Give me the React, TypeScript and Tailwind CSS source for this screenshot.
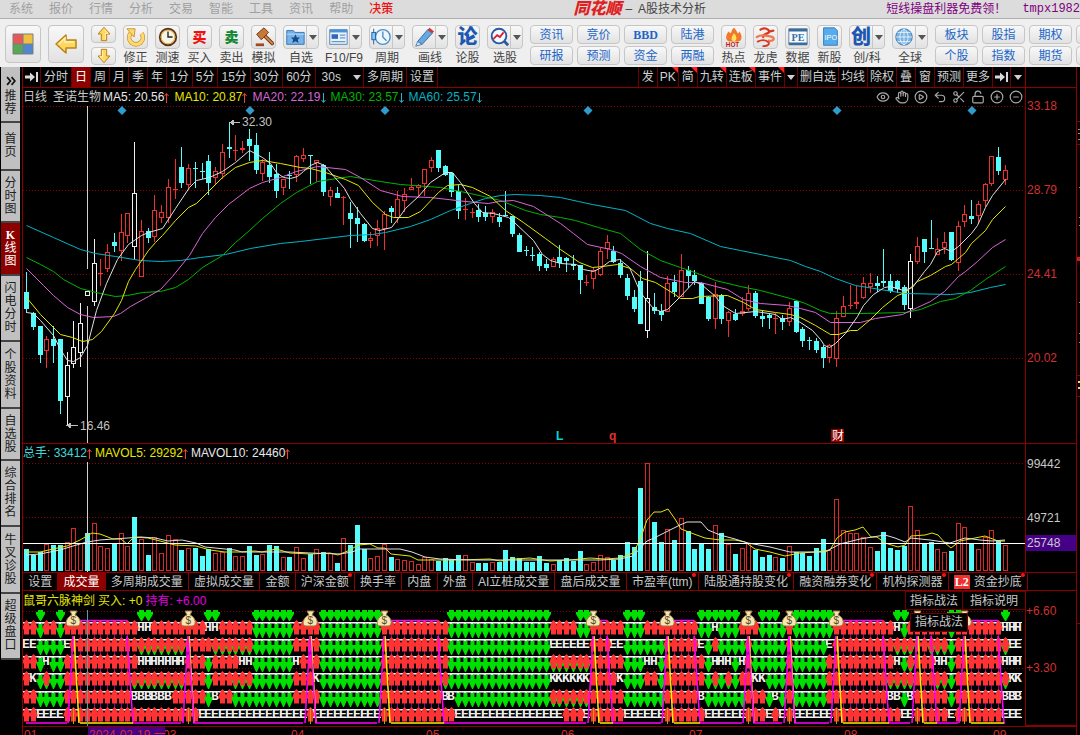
import React from 'react';
import {
  CircleMinus,
  CirclePlay,
  CirclePlus,
  Eye,
  Hand,
  LockOpen,
  Scissors,
  Undo2
} from 'lucide-react';

type Kind = 'r' | 'c' | 'w';
type Candle = [Kind, number, number, number, number];

// kind, high, body top, body bottom, low
const candles: Candle[] = [
  ['c', 272, 292, 309, 313], ['c', 312, 313, 327, 330], ['c', 326, 326, 355, 363], ['r', 336, 339, 351, 368],
  ['c', 326, 339, 346, 363], ['c', 339, 339, 401, 414], ['w', 352, 365, 397, 426], ['w', 321, 347, 364, 368],
  ['w', 303, 323, 353, 367], ['w', 291, 291, 296, 296], ['w', 239, 263, 302, 306], ['r', 259, 273, 274, 286],
  ['r', 244, 252, 269, 272], ['c', 233, 242, 246, 252], ['r', 214, 232, 251, 261], ['r', 213, 213, 236, 243],
  ['w', 142, 193, 247, 259], ['r', 220, 231, 277, 277], ['c', 228, 231, 238, 243], ['r', 195, 210, 237, 242],
  ['r', 205, 212, 218, 223], ['r', 179, 187, 218, 223], ['r', 159, 189, 190, 199], ['c', 147, 167, 183, 188],
  ['r', 164, 168, 185, 190], ['c', 162, 168, 169, 188], ['c', 163, 171, 172, 179], ['c', 155, 161, 183, 195],
  ['r', 167, 171, 178, 184], ['r', 144, 152, 174, 179], ['c', 122, 147, 149, 158], ['r', 135, 150, 151, 161],
  ['r', 141, 148, 150, 153], ['c', 129, 139, 146, 161], ['c', 133, 145, 170, 174], ['r', 159, 162, 174, 181],
  ['c', 152, 165, 177, 183], ['c', 164, 174, 191, 198], ['r', 179, 179, 188, 195], ['c', 171, 175, 176, 189],
  ['r', 155, 156, 175, 182], ['r', 148, 155, 159, 162], ['c', 155, 155, 156, 184], ['r', 160, 160, 163, 182],
  ['c', 164, 165, 192, 196], ['r', 187, 190, 197, 206], ['c', 187, 193, 198, 198], ['r', 196, 197, 198, 225],
  ['c', 202, 213, 219, 248], ['c', 207, 218, 224, 242], ['c', 223, 224, 241, 242], ['r', 232, 238, 241, 248],
  ['r', 220, 228, 236, 246], ['r', 211, 214, 229, 250], ['c', 206, 208, 212, 223], ['r', 191, 199, 218, 223],
  ['r', 188, 194, 201, 212], ['r', 178, 187, 190, 190], ['r', 184, 185, 188, 197], ['r', 169, 169, 184, 196],
  ['r', 157, 160, 168, 172], ['c', 150, 150, 168, 172], ['c', 165, 166, 175, 176], ['c', 172, 173, 192, 197],
  ['c', 185, 191, 211, 219], ['r', 198, 209, 210, 220], ['r', 208, 212, 213, 218], ['c', 204, 210, 217, 222],
  ['c', 206, 213, 217, 221], ['r', 209, 212, 217, 223], ['c', 213, 217, 222, 227], ['c', 191, 215, 216, 216],
  ['c', 216, 216, 234, 237], ['c', 233, 235, 252, 252], ['c', 246, 250, 251, 256], ['c', 247, 255, 256, 261],
  ['c', 252, 254, 266, 271], ['c', 259, 264, 268, 271], ['r', 257, 259, 267, 267], ['c', 245, 257, 263, 268],
  ['c', 257, 258, 261, 272], ['c', 255, 264, 266, 270], ['c', 265, 265, 280, 294], ['r', 275, 282, 283, 286],
  ['r', 268, 270, 279, 289], ['r', 248, 251, 275, 276], ['r', 235, 242, 249, 259], ['c', 246, 251, 262, 263],
  ['c', 259, 263, 275, 278], ['c', 274, 278, 296, 300], ['c', 290, 297, 309, 312], ['c', 271, 281, 324, 324],
  ['w', 251, 298, 331, 338], ['c', 293, 307, 311, 314], ['c', 304, 311, 315, 321], ['r', 276, 283, 312, 312],
  ['c', 275, 282, 292, 297], ['r', 254, 270, 297, 297], ['c', 266, 270, 276, 288], ['c', 270, 275, 281, 285],
  ['c', 282, 283, 304, 304], ['c', 296, 297, 319, 321], ['r', 282, 294, 319, 329], ['c', 294, 295, 319, 324],
  ['r', 311, 312, 321, 337], ['c', 309, 314, 320, 321], ['r', 297, 311, 314, 316], ['r', 285, 293, 309, 311],
  ['c', 291, 293, 316, 318], ['c', 311, 316, 319, 327], ['c', 313, 315, 318, 329], ['r', 313, 318, 319, 334],
  ['c', 315, 318, 322, 330], ['r', 302, 308, 322, 326], ['c', 300, 301, 332, 333], ['c', 327, 329, 341, 347],
  ['c', 337, 340, 341, 350], ['c', 338, 341, 350, 353], ['c', 345, 347, 358, 368], ['r', 344, 345, 358, 363],
  ['r', 311, 318, 359, 367], ['r', 296, 306, 317, 317], ['r', 285, 305, 306, 309], ['r', 286, 302, 304, 309],
  ['r', 277, 283, 298, 299], ['r', 273, 283, 287, 293], ['c', 276, 283, 286, 292], ['c', 249, 281, 283, 287],
  ['c', 274, 281, 291, 293], ['c', 280, 281, 289, 293], ['c', 285, 287, 305, 310], ['w', 254, 261, 309, 318],
  ['r', 237, 246, 262, 264], ['c', 239, 239, 252, 263], ['c', 220, 248, 249, 249], ['r', 238, 249, 255, 255],
  ['r', 232, 242, 248, 254], ['c', 232, 232, 260, 261], ['r', 221, 226, 263, 271], ['r', 205, 214, 222, 227],
  ['c', 200, 216, 219, 224], ['r', 201, 204, 216, 224], ['r', 183, 184, 201, 207], ['r', 156, 156, 184, 186],
  ['c', 147, 157, 171, 175], ['r', 165, 170, 180, 185]
];

// top edge of every volume bar
const volumeTops: number[] = [
  549, 555, 552, 544, 545, 545, 542, 528, 543, 533, 523, 546, 548, 543, 533, 546, 517, 539, 555, 537,
  553, 535, 539, 550, 548, 548, 556, 549, 553, 552, 548, 556, 556, 546, 555, 554, 545, 546, 557, 557,
  547, 558, 554, 549, 552, 553, 563, 538, 545, 525, 549, 558, 556, 544, 557, 559, 560, 561, 564, 557,
  559, 561, 558, 560, 555, 555, 562, 563, 563, 562, 562, 550, 557, 558, 562, 562, 556, 563, 564, 560,
  558, 561, 551, 564, 562, 555, 557, 560, 555, 542, 547, 488, 463, 522, 542, 529, 540, 518, 531, 549,
  544, 549, 525, 533, 544, 554, 548, 543, 550, 557, 555, 557, 558, 546, 552, 553, 556, 548, 539, 550,
  499, 530, 533, 533, 537, 547, 551, 532, 548, 550, 546, 506, 530, 543, 542, 549, 552, 551, 523, 527,
  543, 549, 537, 530, 541, 545
];

// white candles whose volume bar is drawn as a falling one
const fallingVolume = [9, 16];

const averages = [
  {
    color: '#00b4c8',
    points: '26,225 53,237 80,249 95,253 115,256 140,260 160,261 180,260 200,257 225,254 250,248 280,243 300,241 350,235 372,234 385,232 410,226 430,219 450,210 470,203 485,198 500,195 515,194 540,195 560,197 578,201 592,204 625,210 650,223 667,228 690,233 720,246 740,250 770,256 790,260 805,266 820,271 835,278 855,285 880,289 905,293 950,294 970,292 990,287 1005,284'
  },
  {
    color: '#00b400',
    points: '26,257 40,264 53,271 63,279 80,288 100,293 115,296 127,295 142,292 160,291 175,287 188,279 202,267 222,255 235,242 249,230 262,218 280,203 296,192 317,181 350,176 380,181 400,184 440,187 470,193 500,200 525,210 540,214 560,217 575,220 598,227 620,233 640,249 660,260 680,267 700,274 715,280 740,286 760,290 790,298 805,303 820,310 830,313 860,313 905,312 920,309 940,301 955,298 970,290 985,279 1005,266'
  },
  {
    color: '#d766d7',
    points: '26,268 43,285 53,295 67,307 80,314 93,317 113,316 120,313 130,306 148,296 160,289 172,276 189,255 202,233 215,217 228,204 249,188 262,182 280,177 296,171 317,166 345,169 360,177 380,190 402,196 430,197 465,201 488,203 498,201 513,200 533,206 560,223 573,233 587,244 610,249 621,253 640,266 660,277 685,282 700,282 727,289 743,299 760,303 787,305 800,308 815,312 830,322 860,322 875,318 902,314 917,307 930,301 944,291 958,276 965,271 977,261 992,247 1005,239'
  },
  {
    color: '#e6e600',
    points: '26,297 40,314 60,334 72,337 82,341 92,339 101,331 114,313 121,300 128,281 135,269 148,250 155,242 162,235 175,220 188,207 196,203 209,190 222,177 235,167 249,162 262,160 280,163 300,167 310,168 325,172 345,179 358,185 372,202 385,214 393,217 408,217 420,211 438,192 447,185 460,184 472,187 490,196 505,210 523,222 545,238 560,249 579,262 592,267 602,266 617,264 630,268 642,278 655,282 673,293 680,298 692,298 699,296 727,295 743,302 755,309 775,312 790,314 800,317 815,325 830,334 838,334 850,330 857,330 870,319 882,307 897,295 905,292 917,281 930,275 945,266 951,264 965,252 971,243 985,230 992,219 1005,206'
  },
  {
    color: '#e0e0e0',
    points: '26,312 33,313 40,320 53,335 60,349 67,360 73,361 80,357 87,345 96,310 106,283 117,259 128,244 141,235 148,232 162,228 175,208 189,187 196,180 209,177 222,171 235,162 249,150 262,157 270,163 276,172 283,177 290,178 297,176 303,171 310,165 317,162 324,165 344,188 350,199 360,213 372,228 379,230 391,227 398,218 405,208 418,196 430,182 445,172 452,172 460,182 474,203 482,212 493,213 508,217 514,222 533,240 542,254 550,260 560,263 576,264 583,269 593,271 601,267 609,261 619,259 629,267 640,292 647,301 653,308 660,311 667,309 680,296 694,281 701,284 715,296 722,305 735,313 755,311 775,314 782,319 790,317 800,322 812,330 820,339 824,345 829,347 835,343 845,333 857,316 863,305 873,294 884,287 890,286 903,290 912,287 924,271 930,264 937,251 944,248 951,251 958,246 971,233 977,225 985,207 992,195 1005,179'
  }
];

const volumeAverages = [
  {
    color: '#e6e600',
    points: '26,552 40,552 53,549 67,546 80,540 92,533 100,534 113,539 121,539 127,544 134,537 148,538 160,541 175,545 196,546 210,550 225,552 240,552 255,551 262,552 276,549 290,553 310,554 330,553 338,555 350,550 358,545 370,544 378,548 385,548 391,554 410,556 418,560 440,560 458,560 490,559 500,561 515,559 530,558 550,561 570,560 590,558 605,559 620,558 633,553 640,540 647,520 654,512 661,512 668,509 675,519 681,529 694,534 705,538 720,540 735,540 745,542 755,549 770,552 785,556 800,553 815,552 830,550 837,538 845,532 855,530 863,527 871,537 877,537 885,543 898,547 905,545 911,536 925,535 932,533 938,535 945,543 951,548 960,541 970,539 985,536 998,541 1005,541'
  },
  {
    color: '#e0e0e0',
    points: '26,555 40,554 60,550 73,546 87,542 100,540 113,539 128,538 141,537 155,538 168,541 182,540 196,543 205,547 235,550 242,552 262,552 290,552 310,553 340,554 352,552 360,549 400,549 412,552 425,557 440,559 470,560 560,560 600,560 620,559 633,556 647,541 654,538 668,531 680,525 687,522 701,522 708,530 720,535 735,539 748,543 770,547 790,552 825,552 840,544 860,539 885,535 895,538 905,542 911,538 930,540 950,543 965,538 980,540 992,541 1005,540'
  }
];

// run lengths: R buy, G sell, M buy over sell, L letter only
const signalRows = [
  { top: 620, letter: 'H', runs: 'R2 G1 R2 G1 R11 L2 R8 L2 R5 G6 R4 G9 R10 G15 R4 G2 R5 G3 R8 G2 L1 G3 R3 G4 R1 G6 R9 L1 G1 R6 G1 R7 L3' },
  { top: 637, letter: 'E', runs: 'L2 G4 L1 R10 M7 R4 M6 G6 R4 G9 R10 G15 L6 R3 L2 G6 R5 L1 G1 R1 G4 R1 G5 R1 G5 L1 R9 M3 R2 M3 G1 R7 M1 L2' },
  { top: 654, letter: 'H', runs: 'R2 G1 L1 G2 R11 L7 R3 G1 R4 L2 G6 L1 R3 G9 R10 G15 M6 R5 G3 L2 G1 R6 G1 L3 G1 L1 R1 G5 R1 G5 R10 L1 G1 M1 R3 L2 G1 R7 L3' },
  { top: 671, letter: 'K', runs: 'R1 L1 G1 M1 G2 R10 M8 R3 G1 R3 M3 G6 R3 L1 G9 R9 M1 G15 L6 R4 L1 G3 R2 G1 R6 G1 M1 G1 M1 G1 R2 L2 G3 R1 G5 R9 M4 R3 M2 G1 R7 M1 L2' },
  { top: 689, letter: 'B', runs: 'R2 G4 R10 L6 R5 G1 L1 R2 G9 R4 G9 R9 L2 G14 M6 R5 G6 R5 L1 G6 R3 G1 L1 G1 R1 G5 R9 L2 G1 L1 R5 G1 R7 L3' },
  { top: 707, letter: 'E', runs: 'R2 L4 R20 L16 R1 L10 R11 L16 R3 L1 R5 L6 R6 L6 R3 L1 R1 L1 R1 L6 R10 L2 R5 L1 R7 L3' }
];

const topSells: [number, number][] = [
  [2, 2], [5, 5], [17, 18], [27, 28], [34, 39], [44, 52], [63, 77], [82, 83],
  [89, 91], [100, 105], [109, 111], [114, 119], [129, 130], [137, 138], [145, 145]
];

// first and last bar of every holding period
const holdings: [number, number][] = [
  [7, 15], [24, 24], [42, 42], [53, 61], [84, 86], [95, 99], [107, 107], [113, 113], [120, 127], [132, 134], [139, 144]
];

const expand = (runs: string) =>
  runs.split(' ').flatMap((run) => Array<string>(Number(run.slice(1))).fill(run[0]));

const barX = (index: number) => Math.round(26 + index * 6.75);

const range = (from: number, to: number) => Array.from({ length: to - from + 1 }, (_, k) => from + k);

const GridLine = ({ y }: { y: number }) => (
  <line x1="23" x2="1025" y1={y + 0.5} y2={y + 0.5} stroke="#8c0000" strokeDasharray="1 2" />
);

const PriceChart = () => (
  <svg viewBox="23 106 1002 337" className="block w-full" shapeRendering="crispEdges">
    {[106, 190, 274, 358].map((y) => (
      <GridLine key={y} y={y} />
    ))}
    {[122, 250, 385, 588, 837, 972].map((x) => (
      <path key={x} d={`M${x} 106 l4.5 4.5 l-4.5 4.5 l-4.5 -4.5 z`} fill="#2f9dcc" shapeRendering="auto" />
    ))}
    <path d="M87.500 106 V269 M87.500 306 V443" stroke="#d0d0d0" />
    {candles.map(([kind, high, top, bottom, low], index) => {
      const x = barX(index);
      const color = kind === 'c' ? '#54fcfc' : kind === 'r' ? '#f03030' : '#f0f0f0';
      const height = Math.max(1, bottom - top);
      return (
        <g key={index} fill={color}>
          <rect x={x} y={high} width="1" height={Math.max(0, top - high)} />
          <rect x={x} y={bottom} width="1" height={Math.max(0, low - bottom)} />
          {kind === 'c' || height < 3 ? (
            <rect x={x - 2} y={top} width="5" height={height} />
          ) : (
            <rect x={x - 1.5} y={top + 0.5} width="4" height={height - 1} fill="black" stroke={color} />
          )}
        </g>
      );
    })}
    {averages.map((line) => (
      <polyline
        key={line.color}
        points={line.points}
        fill="none"
        stroke={line.color}
        shapeRendering="auto"
        transform="translate(0.5 0.5)"
      />
    ))}
    <g stroke="#c0c0c0" fill="#c0c0c0">
      <path d="M230 122.500 H240 M230 122.500 l3 -2 v4 z" />
      <path d="M67 425.500 H78 M67 425.500 l3 -2 v4 z" />
    </g>
    <g fontSize="12" fontFamily="Liberation Sans, sans-serif" fill="#c0c0c0">
      <text x="242" y="126">32.30</text>
      <text x="80" y="430">16.46</text>
      <text x="556" y="440" fill="#00d8d8" fontWeight="bold">L</text>
      <text x="609" y="440" fill="#e03030" fontWeight="bold">q</text>
      <rect x="831" y="429" width="13" height="13" fill="#8c0000" />
      <text x="832" y="440" fill="#ffffff" fontFamily="Noto Sans CJK SC, sans-serif">财</text>
    </g>
  </svg>
);

const VolumeChart = () => (
  <svg viewBox="23 462 1002 110" className="block w-full" shapeRendering="crispEdges">
    <GridLine y={463} />
    <GridLine y={517} />
    {volumeTops.map((top, index) => {
      const x = barX(index);
      const falling = candles[index][0] === 'c' || fallingVolume.includes(index);
      return falling ? (
        <rect key={index} x={x - 2} y={top} width="5" height={571 - top} fill="#54fcfc" />
      ) : (
        <rect key={index} x={x - 1.5} y={top + 0.5} width="4" height={570 - top} fill="none" stroke="#d82828" />
      );
    })}
    {volumeAverages.map((line) => (
      <polyline key={line.color} points={line.points} fill="none" stroke={line.color} shapeRendering="auto" />
    ))}
    <path d="M23 543.500 H1025" stroke="#ffffff" />
    <path d="M87.500 462 V572" stroke="#d0d0d0" />
  </svg>
);

const upArrow = 'l1.500 1.500 l2.500 6 v2 h-1.500 v5 h-5 v-5 h-1.500 v-2 l2.500 -6 z';
const downArrow = 'h2 v4 h2 v2 l-3.500 8 h-1 l-3.500 -8 v-2 h2 v-4 z';
const smallDownArrow = 'h2.500 v3 h2 v2 l-4 7 h-1 l-4 -7 v-2 h2 v-3 z';

const SignalChart = () => (
  <svg viewBox="23 610 1002 116" className="block w-full">
    <g shapeRendering="crispEdges">
      <GridLine y={611} />
      <GridLine y={668} />
    </g>
    <g fill="none">
      {holdings.map(([from, to]) =>
        range(from + 1, to).map((bar) => (
          <path key={bar} d={`M${barX(bar) + 0.5} 622 V722`} stroke="#8800a0" />
        ))
      )}
    </g>
    <g fontSize="13" fontWeight="bold" fontFamily="Liberation Mono, monospace" fill="#f0f0f0">
      {signalRows.map((row) =>
        expand(row.runs).map((state, index) => (
          <text key={`${row.top}-${index}`} x={barX(index) - 4} y={row.top + 11}>
            {state === 'L' ? row.letter : 'T'}
          </text>
        ))
      )}
    </g>
    {signalRows.map((row) =>
      expand(row.runs).map((state, index) =>
        state === 'R' || (row.top < 700 && index < 2) ? null : (
          <path
            key={`${row.top}-${index}`}
            d={`M${barX(index) - 3} ${row.top + 2.5} h7 ${row.top > 700 ? 'm0 8 h-7' : ''}`}
            stroke="#f0f0f0"
          />
        )
      )
    )}
    {topSells.flatMap(([from, to]) =>
      range(from, to).map((bar) => (
        <path key={bar} d={`M${barX(bar) + 0.5} 609 ${smallDownArrow}`} fill="#00e000" />
      ))
    )}
    {signalRows.map((row) =>
      expand(row.runs).map((state, index) => (
        <g key={`${row.top}-${index}`}>
          {(state === 'G' || state === 'M') && (
            <path d={`M${barX(index) + 0.5} ${row.top + 4} ${downArrow}`} fill="#00e000" />
          )}
          {(state === 'R' || state === 'M') && (
            <path d={`M${barX(index) + 0.5} ${row.top} ${upArrow}`} fill="#ff3333" />
          )}
        </g>
      ))
    )}
    <g fill="none" strokeWidth="1.500">
      {holdings.map(([from, to], index) => {
        const nextStart = index + 1 < holdings.length ? barX(holdings[index + 1][0] - 1) : barX(145);
        const left = barX(from);
        const right = barX(to);
        return (
          <g key={from}>
            <path d={`M${left + 1} 636 L${left + 6} 723`} stroke="#ffee00" />
            <path
              d={`M${left - 5} 723 L${left} 636 M${left} 620.500 H${right} M${right} 636 L${right + 6} 723 H${Math.max(nextStart, right + 6)}`}
              stroke="#ff00ff"
            />
            <path d={`M${left + 0.5} 708 V724`} stroke="#c0a000" strokeWidth="1" />
            {to > from && <path d={`M${left + 7} 723 H${right + 6}`} stroke="#ffee00" />}
          </g>
        );
      })}
      <path d="M26 723 H67" stroke="#ff00ff" />
    </g>
    <path d="M87.500 610 V726" stroke="#5c9c9c" />
    {holdings.map(([from]) => (
      <g key={from} transform={`translate(${barX(from)} 611)`}>
        <path d="M-3 0 H4 L2 4 C8 6 9 15 4 15 H-4 C-9 15 -7 6 -1 4 Z" fill="#f6e6b4" stroke="#9a7c40" />
        <text x="-2.500" y="13" fontSize="10" fontFamily="Liberation Sans, sans-serif" fill="#5c4a20">
          $
        </text>
      </g>
    ))}
  </svg>
);

/* ---------- toolbar ---------- */

const YellowArrow = ({ className }: { className: string }) => (
  <svg viewBox="0 0 24 24" className={className}>
    <path d="M2 12 L12 3 V8 H22 V16 H12 V21 Z" fill="#ffd75e" stroke="#b98218" strokeWidth="1.500" strokeLinejoin="round" />
    <path d="M5 12 L11 6 V10 H20" fill="none" stroke="#fff3b8" strokeWidth="1.500" />
  </svg>
);

const icons: Record<string, React.ReactNode> = {
  修正: (
    <>
      <path d="M6 8 A7.500 7.500 0 1 0 18 8" fill="none" stroke="#c8902a" strokeWidth="5" />
      <path d="M6 8 A7.500 7.500 0 1 0 18 8" fill="none" stroke="#ffd870" strokeWidth="3.500" />
      <path d="M2 3 L11 3 L10 12 Z" fill="#ffd870" stroke="#c8902a" />
    </>
  ),
  测速: (
    <>
      <circle cx="12" cy="12" r="9" fill="#f8f4e4" stroke="#5c3210" strokeWidth="2" />
      <circle cx="12" cy="12" r="7.500" fill="none" stroke="#d8a040" />
      <path d="M12 6 V12 H17" fill="none" stroke="#222" strokeWidth="1.500" />
    </>
  ),
  模拟: (
    <>
      <path d="M12 10 L21 19" stroke="#7a3a12" strokeWidth="4" strokeLinecap="round" />
      <path d="M12 10 L21 19" stroke="#d08848" strokeWidth="2" strokeLinecap="round" />
      <path d="M4 9 L12 2 L17 7 L9 15 Z" fill="#c87838" stroke="#6c3410" />
      <path d="M3 19 H12 V22 H3 Z" fill="#a04a20" />
    </>
  ),
  自选: (
    <>
      <path d="M3 5 H10 L12 7 H22 V20 H3 Z" fill="#78b4ea" stroke="#3272b4" />
      <path d="M3 9 H22" stroke="#b8dcfa" />
      <path d="M12.500 9 L14 12.500 L17.500 12.500 L15 15 L16 18.500 L12.500 16.500 L9 18.500 L10 15 L7.500 12.500 L11 12.500 Z" fill="#174a86" />
    </>
  ),
  'F10/F9': (
    <>
      <path d="M3 4 H22 V20 H3 Z" fill="#e8f2fc" stroke="#4c80b8" />
      <path d="M3 4 H22 V7 H3 Z" fill="#4c90d8" />
      <path d="M5 9 H12 V14 H5 Z" fill="#2c68b8" />
      <path d="M14 10 H20 M14 13 H20 M5 17 H20" stroke="#6c98c8" strokeWidth="1.500" />
    </>
  ),
  周期: (
    <>
      <circle cx="14" cy="12" r="8" fill="#eef6fc" stroke="#4890c8" strokeWidth="1.500" />
      <path d="M14 6 V12 L18 16" fill="none" stroke="#4890c8" strokeWidth="1.500" />
      <path d="M4 3 V20" stroke="#1c62a8" />
      <rect x="2" y="7" width="4" height="8" fill="#8cc4ec" stroke="#1c62a8" />
    </>
  ),
  画线: (
    <>
      <path d="M5 17 L16 4 L21 8 L10 20 Z" fill="#68a8e0" stroke="#2c68a8" />
      <path d="M16 4 L18 2 L23 6 L21 8 Z" fill="#d83030" />
      <path d="M5 17 L10 20 L3 22 Z" fill="#d8e8f4" stroke="#4878a8" />
    </>
  ),
  选股: (
    <>
      <circle cx="12" cy="11" r="8" fill="#f4f8ff" stroke="#2858a0" strokeWidth="2" />
      <path d="M18 17 L22 21" stroke="#2858a0" strokeWidth="3" />
      <path d="M6 14 L10 10 L13 12 L17 7" fill="none" stroke="#d82030" strokeWidth="2" />
    </>
  ),
  热点: (
    <>
      <path d="M12 2 C16 6 15 8 17 8 L18 6 C22 12 20 16 17 17 H7 C3 16 2 11 6 6 L8 8 C10 7 9 4 12 2 Z" fill="#f07828" />
      <path d="M12 8 C16 12 15 16 12 17 C8 16 9 12 12 8 Z" fill="#ffe060" />
      <text x="3" y="23" fontSize="7" fontWeight="bold" fill="#c01818" fontFamily="Liberation Sans, sans-serif">HOT</text>
    </>
  ),
  龙虎: (
    <g fill="none" strokeLinecap="round">
      <path d="M6 4 C10 1 14 3 16 6 L20 5 M16 6 C13 10 8 8 9 12" stroke="#d83820" strokeWidth="2.500" />
      <path d="M2 12 C8 8 13 11 19 12 C22 14 20 17 15 16" stroke="#f07850" strokeWidth="2.500" />
      <path d="M3 17 C9 14 13 16 15 18 C16 21 12 22 9 22" stroke="#d83820" strokeWidth="2" />
    </g>
  ),
  数据: (
    <>
      <path d="M2 3 H22 V20 H2 Z" fill="#f8fafc" stroke="#5880a8" />
      <path d="M2 3 H22 V6 H2 Z M2 18 H22 V21 H2 Z" fill="#3c6c9c" />
      <text x="5" y="16" fontSize="11" fontWeight="bold" fill="#3470ac" fontFamily="Liberation Serif, serif">PE</text>
    </>
  ),
  新股: (
    <>
      <path d="M5 2 H17 L20 5 V21 H5 Z" fill="#58acec" stroke="#2c7cc0" />
      <text x="6" y="15" fontSize="8" fill="#ffffff" fontFamily="Liberation Sans, sans-serif">IPO</text>
    </>
  ),
  全球: (
    <>
      <circle cx="12" cy="12" r="9" fill="#78b0e0" stroke="#3878b4" />
      <path d="M3 12 H21 M5 7 H19 M5 17 H19 M12 3 V21 M12 3 C6 8 6 16 12 21 M12 3 C18 8 18 16 12 21" fill="none" stroke="#e4f2fc" />
    </>
  )
};

const glyphIcons: Record<string, [string, string]> = {
  买入: ['买', 'text-[#f01010] text-sm'],
  卖出: ['卖', 'text-[#108830] text-sm'],
  论股: ['论', 'text-[#1c58b0] text-xl'],
  '创/科': ['创', 'text-[#1c58b0] text-xl']
};

const tileClass = 'rounded-sm border border-[#c6c6c6] bg-linear-to-b from-[#f8f8f8] to-[#e2e2e2]';

const Caret = ({ className }: { className?: string }) => (
  <svg viewBox="0 0 8 5" className={`h-[5px] w-2 ${className ?? ''}`}>
    <path d="M0 0 H8 L4 5 Z" fill="currentColor" />
  </svg>
);

const Tool = ({ label, menu }: { label: string; menu?: boolean }) => (
  <button className={`flex shrink-0 flex-col items-center ${menu ? 'w-9' : 'w-[25px]'}`}>
    <span className={`flex h-6 w-full items-center ${tileClass}`}>
      <span className="flex h-full flex-1 items-center justify-center">
        {glyphIcons[label] ? (
          <span className={`font-black leading-none ${glyphIcons[label][1]}`}>{glyphIcons[label][0]}</span>
        ) : (
          <svg viewBox="0 0 24 24" className="size-[22px]">
            {icons[label]}
          </svg>
        )}
      </span>
      {menu && (
        <span className="flex h-full w-3 items-center justify-center border-l border-[#c6c6c6] text-[#555]">
          <Caret />
        </span>
      )}
    </span>
    <span className="whitespace-nowrap text-xs leading-[18px] text-[#444]">{label}</span>
  </button>
);

const LinkPair = ({ labels }: { labels: [string, string] }) => (
  <div className="flex w-[43px] shrink-0 flex-col gap-[2px]">
    {labels.map((label) => (
      <button key={label} className={`h-[19px] text-xs leading-none text-[#1c66c8] ${tileClass}`}>
        {label === 'BBD' ? <b className="font-['Liberation_Serif',serif]">BBD</b> : label}
      </button>
    ))}
  </div>
);

const Toolbar = () => (
  <div className="flex h-12 shrink-0 items-start gap-[7px] overflow-hidden bg-[#efefef] pl-[5px] pt-[6px]">
    <button aria-label="首页" className={`flex h-[38px] w-9 shrink-0 items-center justify-center ${tileClass}`}>
      <svg viewBox="0 0 22 22" className="size-[22px]">
        <rect x="1" y="1" width="10" height="10" fill="#e85858" />
        <rect x="11" y="1" width="10" height="10" fill="#f0c040" />
        <rect x="1" y="11" width="10" height="10" fill="#58a858" />
        <rect x="11" y="11" width="10" height="10" fill="#5088d0" />
        <path d="M1 1 H21 V21 H1 Z M11 1 V21 M1 11 H21" fill="none" stroke="#7c7c7c" />
      </svg>
    </button>
    <button aria-label="返回" className={`flex h-[38px] w-9 shrink-0 items-center justify-center ${tileClass}`}>
      <YellowArrow className="size-6" />
    </button>
    <div className="flex shrink-0 flex-col gap-1">
      <button aria-label="上一个" className={`flex h-[18px] w-[25px] items-center justify-center ${tileClass}`}>
        <YellowArrow className="size-4 rotate-90" />
      </button>
      <button aria-label="下一个" className={`flex h-[18px] w-[25px] items-center justify-center ${tileClass}`}>
        <YellowArrow className="size-4 -rotate-90" />
      </button>
    </div>
    <Tool label="修正" />
    <Tool label="测速" />
    <Tool label="买入" />
    <Tool label="卖出" />
    <Tool label="模拟" />
    <Tool label="自选" menu />
    <Tool label="F10/F9" menu />
    <Tool label="周期" menu />
    <Tool label="画线" menu />
    <Tool label="论股" />
    <Tool label="选股" menu />
    <div className="flex shrink-0 gap-1">
      <LinkPair labels={['资讯', '研报']} />
      <LinkPair labels={['竞价', '预测']} />
      <LinkPair labels={['BBD', '资金']} />
      <LinkPair labels={['陆港', '两融']} />
    </div>
    <Tool label="热点" />
    <Tool label="龙虎" />
    <Tool label="数据" />
    <Tool label="新股" />
    <Tool label="创/科" menu />
    <Tool label="全球" menu />
    <div className="flex shrink-0 gap-1">
      <LinkPair labels={['板块', '个股']} />
      <LinkPair labels={['股指', '指数']} />
      <LinkPair labels={['期权', '期货']} />
      <LinkPair labels={['', ' ']} />
    </div>
  </div>
);

/* ---------- bars and tabs ---------- */

const menus = ['系统', '报价', '行情', '分析', '交易', '智能', '工具', '资讯', '帮助'];

const periods = ['分时', '日', '周', '月', '季', '年', '1分', '5分', '15分', '30分', '60分'];

const chartTools = [
  { label: '发' },
  { label: 'PK', hot: true },
  { label: '简', hot: true },
  { label: '九转', hot: true },
  { label: '连板', hot: true },
  { label: '事件', hot: true },
  { label: '' },
  { label: '删自选' },
  { label: '均线' },
  { label: '除权' },
  { label: '叠' },
  { label: '窗' },
  { label: '预测' },
  { label: '更多' }
];

const indicatorTabs = [
  { label: '设置' },
  { label: '成交量' },
  { label: '多周期成交量' },
  { label: '虚拟成交量' },
  { label: '金额' },
  { label: '沪深金额', dot: true },
  { label: '换手率' },
  { label: '内盘' },
  { label: '外盘' },
  { label: 'AI立桩成交量' },
  { label: '盘后成交量' },
  { label: '市盈率(ttm)', dot: true },
  { label: '陆股通持股变化', dot: true },
  { label: '融资融券变化', dot: true },
  { label: '机构探测器', dot: true },
  { label: '资金抄底', dot: true, level2: true }
];

const sideTabs = [
  { label: '首页', size: 'h-12' },
  { label: '分时图', size: 'h-[52px]' },
  { label: 'K线图', size: 'h-[53px]' },
  { label: '闪电分时', size: 'h-[66px]' },
  { label: '个股资料', size: 'h-[67px]' },
  { label: '自选股', size: 'h-[52px]' },
  { label: '综合排名', size: 'h-[66px]' },
  { label: '牛叉诊股', size: 'h-[67px]' },
  { label: '超级盘口', size: 'h-[66px]' }
];

const SkipIcon = () => (
  <svg viewBox="0 0 13 10" className="h-[10px] w-[13px]">
    <path d="M0 3.500 H5 V0.500 L10 5 L5 9.500 V6.500 H0 Z M11 0 H13 V10 H11 Z" fill="#d8d8d8" />
  </svg>
);

const PeriodBar = () => (
  <div className="flex h-[21px] border-b border-[#8c0000]">
    <div className="flex min-w-0 flex-1 text-xs leading-5 text-[#d0d0d0]">
      <button aria-label="展开" className="flex w-[18px] items-center justify-center border-r border-[#6c0000]">
        <SkipIcon />
      </button>
      {periods.map((period) => (
        <button
          key={period}
          className={`whitespace-nowrap border-r border-[#6c0000] px-[3px] ${period === '日' ? 'bg-[#8c0000] text-white' : ''}`}
        >
          {period}
        </button>
      ))}
      <button className="flex items-center gap-3 border-r border-[#6c0000] pl-[6px] pr-[2px]">
        30s
        <Caret />
      </button>
      <button className="border-r border-[#6c0000] px-[3px]">多周期</button>
      <button className="border-r border-[#6c0000] px-[3px]">设置</button>
      <div className="ml-auto flex border-l border-[#6c0000]">
        {chartTools.map((tool) => (
          <button
            key={tool.label}
            aria-label={tool.label || '事件菜单'}
            className={`relative flex items-center justify-center whitespace-nowrap border-r border-[#6c0000] ${
              tool.label.length === 1 ? 'px-[3px]' : 'px-[2px]'
            }`}
          >
            {tool.label || <Caret />}
            {tool.hot && (
              <svg viewBox="0 0 6 6" className="absolute right-0 top-0 size-[6px]">
                <path d="M0 0 H6 V6 Z" fill="#ff2020" />
              </svg>
            )}
          </button>
        ))}
        <button aria-label="收起" className="flex w-[18px] items-center justify-center border-r border-[#6c0000]">
          <SkipIcon />
        </button>
        <button aria-label="更多选项" className="flex w-[14px] items-center justify-center">
          <Caret />
        </button>
      </div>
    </div>
    <div className="w-[51px] border-l border-[#8c0000]" />
  </div>
);

const Trend = ({ up }: { up?: boolean }) => (
  <svg viewBox="0 0 5 10" className="inline-block h-[10px] w-[5px]">
    <path
      d={up ? 'M2.500 10 V1 M0.500 3 L2.500 0.500 L4.500 3' : 'M2.500 0 V9 M0.500 7 L2.500 9.500 L4.500 7'}
      fill="none"
      stroke={up ? '#f04030' : '#30b0c8'}
    />
  </svg>
);

const AverageBar = () => (
  <div className="flex h-[18px]">
    <div className="flex min-w-0 flex-1 items-center whitespace-nowrap text-xs">
      <span className="mr-[6px] text-[#c8c8c8]">日线</span>
      <span className="mr-[2px] text-[#c8c8c8]">圣诺生物</span>
      <span className="mr-[5px] text-[#e8e8e8]">MA5: 20.56<Trend up /></span>
      <span className="mr-[5px] text-[#e6e600]">MA10: 20.87<Trend up /></span>
      <span className="mr-[5px] text-[#d766d7]">MA20: 22.19<Trend /></span>
      <span className="mr-[5px] text-[#00b400]">MA30: 23.57<Trend /></span>
      <span className="text-[#00b4c8]">MA60: 25.57<Trend /></span>
      <div className="ml-auto flex gap-[5px] pr-[2px] text-[#a8a8a8]">
        {[Eye, Hand, CirclePlay, Undo2, Scissors, LockOpen, CirclePlus, CircleMinus].map((Icon, index) => (
          <Icon key={index} size={14} strokeWidth={2} />
        ))}
      </div>
    </div>
    <div className="w-[51px] border-l border-[#8c0000]" />
  </div>
);

const SideBar = () => (
  <nav className="flex w-[22px] shrink-0 flex-col pl-px pr-[2px] text-center text-xs leading-[13px] text-[#222]">
    <button className="flex h-14 flex-col items-center gap-1 border-b-2 border-[#444] bg-[#c0c0c0] pt-[9px]">
      <svg viewBox="0 0 9 9" className="size-[10px] shrink-0">
        <path d="M1 1 L4 4.500 L1 8 M5 1 L8 4.500 L5 8" fill="none" stroke="#111" strokeWidth="1.500" />
      </svg>
      <span className="w-3 break-all">推荐</span>
    </button>
    {sideTabs.map((tab) => (
      <button
        key={tab.label}
        className={`flex items-center justify-center border-b-2 border-[#444] ${tab.size} ${
          tab.label === 'K线图' ? 'bg-[#8c0000] text-white' : 'bg-[#c0c0c0]'
        }`}
      >
        <span className="w-3 break-all">
          {tab.label === 'K线图' ? <><b className="font-['Liberation_Serif',serif]">K</b>线图</> : tab.label}
        </span>
      </button>
    ))}
  </nav>
);

const IndicatorTabs = () => (
  <div className="h-[19px] border-y border-[#8c0000]">
    <div className="mr-12 flex h-full">
      {indicatorTabs.map((tab) => (
        <button
          key={tab.label}
          className={`relative flex-auto whitespace-nowrap border-r border-[#8c0000] px-1 text-xs leading-none ${
            tab.label === '成交量' ? 'bg-[#8c0000] text-white' : 'text-[#c8c8c8]'
          }`}
        >
          {tab.level2 && <b className="mr-1 bg-[#f03030] px-px font-['Liberation_Serif',serif] text-white">L2</b>}
          {tab.label}
          {tab.dot && <span className="absolute right-0.5 top-0 size-1 rounded-full bg-[#ff1010]" />}
        </button>
      ))}
    </div>
  </div>
);

const months = [
  { label: '04', x: 'left-[268px]' },
  { label: '05', x: 'left-[403px]' },
  { label: '06', x: 'left-[538px]' },
  { label: '07', x: 'left-[666px]' },
  { label: '08', x: 'left-[821px]' },
  { label: '09', x: 'left-[970px]' }
];

const App: React.FC = () => {
  return (
    <div className="flex h-screen flex-col overflow-hidden bg-black font-['Liberation_Sans','Noto_Sans_CJK_SC',sans-serif]">
      <header className="flex h-[19px] shrink-0 items-center whitespace-nowrap border-b border-[#b0b0b0] bg-[#dcdcdc] pl-[9px] text-xs">
        <nav className="flex gap-4 text-[#a0a0a0]">
          {menus.map((menu) => (
            <button key={menu}>{menu}</button>
          ))}
          <button className="font-medium text-[#f01010]">决策</button>
        </nav>
        <h1 className="ml-auto flex items-center gap-1 text-[#444]">
          <b className="text-base font-black italic leading-none text-[#e02020]">同花顺</b>
          <span>–&nbsp; A股技术分析</span>
        </h1>
        <a href="#gift" className="ml-auto text-[#800080]">短线操盘利器免费领！</a>
        <span className="ml-4 font-['Liberation_Mono',monospace] text-[#800080]">tmpx1982</span>
      </header>
      <Toolbar />

      <div className="flex min-h-0 flex-1 items-start">
        <SideBar />

        <main className="min-w-0 flex-1 border-l border-[#8c0000]">
          <PeriodBar />
          <AverageBar />

          <section className="flex border-b border-[#8c0000]">
            <div className="min-w-0 flex-1">
              <PriceChart />
            </div>
            <div className="w-[51px] border-l border-[#8c0000] text-xs text-[#d03030]">
              <div className="-mt-2 flex flex-col pl-px">
                {['33.18', '28.79', '24.41', '20.02'].map((price) => (
                  <span key={price} className="h-21">{price}</span>
                ))}
              </div>
            </div>
          </section>

          <section className="flex">
            <div className="min-w-0 flex-1">
              <div className="flex h-[18px] items-center gap-[3px] whitespace-nowrap text-xs">
                <span className="text-[#40d8d8]">总手: 33412<Trend up /></span>
                <span className="text-[#e6e600]">MAVOL5: 29292<Trend up /></span>
                <span className="text-[#e8e8e8]">MAVOL10: 24460<Trend up /></span>
              </div>
              <VolumeChart />
            </div>
            <div className="flex w-[51px] flex-col border-l border-[#8c0000] pt-3 text-xs text-[#c8c8c8]">
              <span className="h-[54px] pl-px">99442</span>
              <span className="h-[25px] pl-px">49721</span>
              <span className="bg-[#460087] pl-px">25748</span>
            </div>
          </section>

          <IndicatorTabs />

          <section className="flex">
            <div className="relative min-w-0 flex-1">
              <div className="flex h-[19px] items-center gap-[3px] whitespace-nowrap text-xs">
                <span className="text-[#e6e600]">鼠哥六脉神剑</span>
                <span className="text-[#e6e600]">买入: +0</span>
                <span className="text-[#e000e0]">持有: +6.00</span>
                <div className="ml-auto flex h-full items-stretch text-[#c8c8c8]">
                  <button className="border border-[#6c0000] px-1 leading-none">指标战法</button>
                  <button className="border-y border-[#6c0000] px-[7px] leading-none">指标说明</button>
                </div>
              </div>
              <SignalChart />
              <div
                role="tooltip"
                className="absolute right-[57px] top-[22px] border border-[#6c0000] bg-black px-1 text-xs leading-[17px] text-[#c8c8c8]"
              >
                指标战法
              </div>
            </div>
            <div className="flex w-[51px] flex-col border-b border-l border-[#8c0000] pt-3 text-xs text-[#d03030]">
              <span className="h-[57px]">+6.60</span>
              <span>+3.30</span>
            </div>
          </section>

          <footer className="relative h-4 border-t border-[#8c0000] text-xs text-[#d03030]">
            <span className="absolute left-px top-0">01</span>
            <span className="absolute left-[140px] top-0">03</span>
            <span className="absolute left-[65px] top-0 w-[77px] whitespace-nowrap bg-[#460087] pl-px">2024-02-19 一</span>
            {months.map((month) => (
              <span key={month.label} className={`absolute top-0 ${month.x}`}>
                {month.label}
              </span>
            ))}
          </footer>
        </main>

        <aside className="w-1 shrink-0 self-stretch border-l border-[#8c0000]">
          <svg viewBox="0 0 3 668" className="h-[668px] w-[3px]" shapeRendering="crispEdges">
            <path d="M0 54 H3 M0 77 H3 M0 308 H3 M0 329 H3 M0 556 H3" stroke="#8c0000" />
            <path d="M1 62 h2 M1 66 h2 M1 72 h2 M2 120 h1 M2 150 h1 M2 158 h1 M2 235 h1 M2 266 h1 M2 275 h1" stroke="#909090" />
            <rect x="0" y="190" width="3" height="4" fill="#c02020" />
            <path d="M1 315 h2 M1 321 h2" stroke="#f0e040" strokeWidth="2" />
          </svg>
        </aside>
      </div>
    </div>
  );
};

export default App;
